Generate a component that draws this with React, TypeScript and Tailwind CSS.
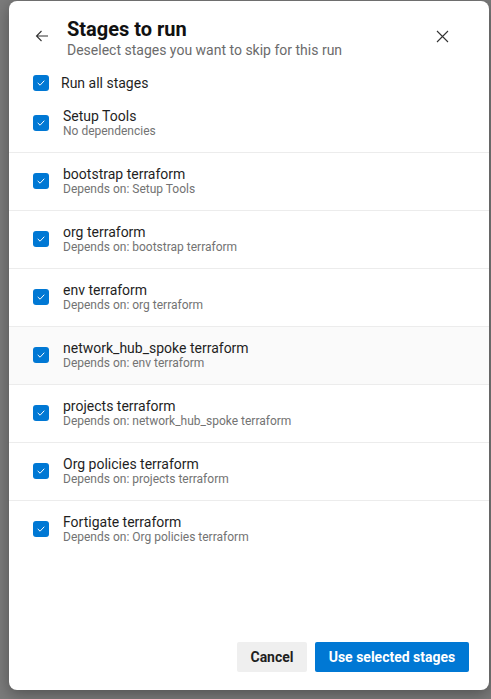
import React from 'react';

const stages = [
  { name: 'Setup Tools', dep: 'No dependencies' },
  { name: 'bootstrap terraform', dep: 'Depends on: Setup Tools' },
  { name: 'org terraform', dep: 'Depends on: bootstrap terraform' },
  { name: 'env terraform', dep: 'Depends on: org terraform' },
  { name: 'network_hub_spoke terraform', dep: 'Depends on: env terraform', hover: true },
  { name: 'projects terraform', dep: 'Depends on: network_hub_spoke terraform' },
  { name: 'Org policies terraform', dep: 'Depends on: projects terraform' },
  { name: 'Fortigate terraform', dep: 'Depends on: Org policies terraform' },
];

function Check() {
  return (
    <div className="w-4 h-4 shrink-0 rounded-[3px] bg-[#0078d4] flex items-center justify-center">
      <svg width="10" height="10" viewBox="0 0 10 10" fill="none">
        <path d="M2 5.2 L4.1 7.2 L8 3" stroke="white" strokeWidth="1" strokeLinecap="round" strokeLinejoin="round" />
      </svg>
    </div>
  );
}

export default function App() {
  return (
    <div
      className="h-[699px] w-[491px] bg-[#7b7b7b] pl-[9px] pt-px overflow-hidden"
      style={{ fontFamily: 'Roboto, "Liberation Sans", sans-serif' }}
    >
      <div className="w-[480px] h-[689px] bg-white rounded-lg shadow-[0_4px_16px_rgba(0,0,0,0.35)] flex flex-col">
        {/* Header */}
        <div className="flex items-start pt-4 pl-[26px] pr-[40px]">
          <div className="w-[32px] pt-[13px]">
            <svg width="14" height="12" viewBox="0 0 14 12" fill="none">
              <path d="M13 6 H1.5 M6.5 1 L1.5 6 L6.5 11" stroke="#333" strokeWidth="1.1" />
            </svg>
          </div>
          <div className="flex-1">
            <h1 className="text-[20px] leading-6 font-bold text-[#111]">Stages to run</h1>
            <p className="text-sm leading-[18px] text-[#6b6b6b]">Deselect stages you want to skip for this run</p>
          </div>
          <div className="pt-[13px]">
            <svg width="13" height="13" viewBox="0 0 13 13" fill="none">
              <path d="M1 1 L12 12 M12 1 L1 12" stroke="#333" strokeWidth="1.1" />
            </svg>
          </div>
        </div>

        {/* Run all */}
        <div className="flex items-center gap-3 pl-6 mt-[16px] h-4">
          <Check />
          <span className="text-sm text-[#1f1f1f]">Run all stages</span>
        </div>

        {/* Stage list */}
        <div className="mt-[4px]">
          {stages.map((s, i) => (
            <div
              key={s.name}
              className={`h-[58px] flex items-center gap-[14px] pl-6 pb-px border-b ${
                i < stages.length - 1 ? 'border-[#ececec]' : 'border-transparent'
              } ${s.hover ? 'bg-[#fafafa]' : ''}`}
            >
              <Check />
              <div className="flex flex-col">
                <span className="text-sm leading-4 text-[#1f1f1f]">{s.name}</span>
                <span className="text-xs leading-[14px] text-[#737373]">{s.dep}</span>
              </div>
            </div>
          ))}
        </div>

        {/* Footer */}
        <div className="mt-auto flex justify-end gap-2 pr-5 pb-[18px]">
          <button className="h-[30px] w-[70px] rounded-[2px] bg-[#efefef] text-sm font-bold text-[#1f1f1f]">
            Cancel
          </button>
          <button className="h-[30px] w-[154px] rounded-[2px] bg-[#0078d4] text-sm font-bold text-white">
            Use selected stages
          </button>
        </div>
      </div>
    </div>
  );
}
